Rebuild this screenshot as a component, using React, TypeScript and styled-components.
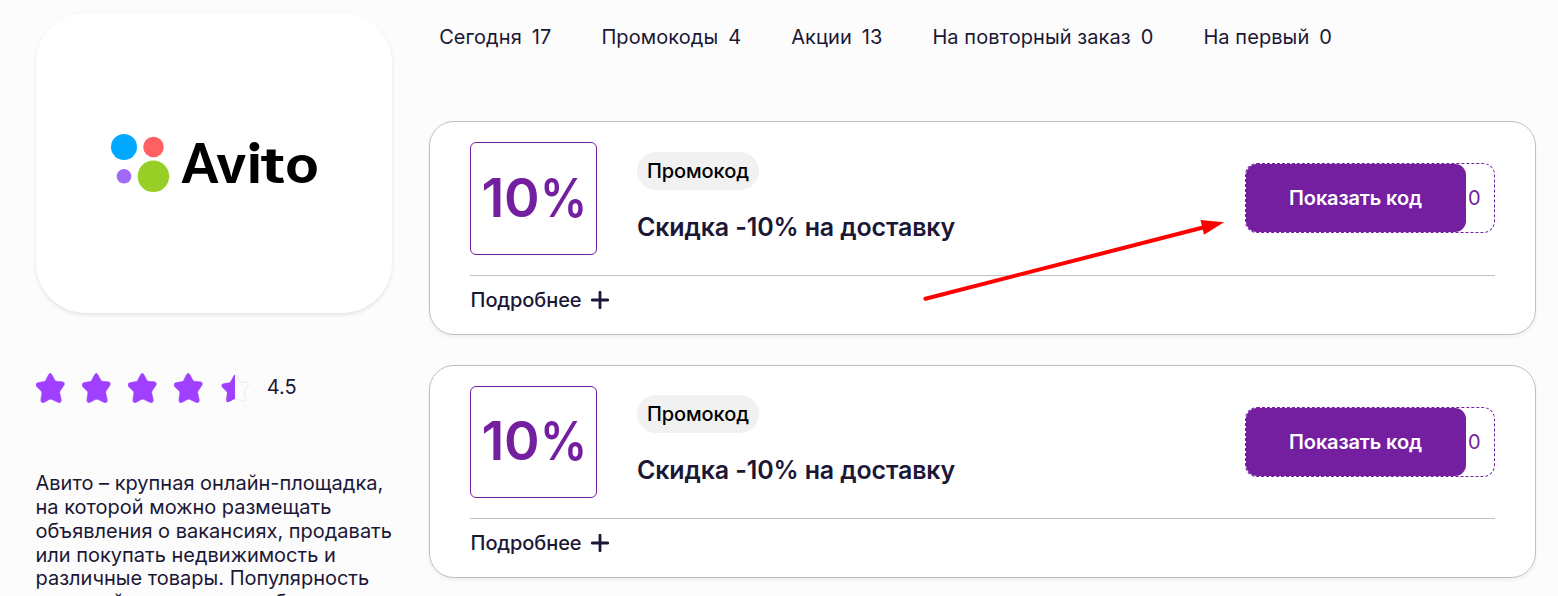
import React from "react";
import styled, { createGlobalStyle } from "styled-components";

const purple = "#731f9f";
const ink = "#1b1736";
const border = "#c0c0c0";

const GlobalStyle = createGlobalStyle`
  * { box-sizing: border-box; }
  body {
    margin: 0;
    background: #fcfcfc;
    color: ${ink};
    font-family: Inter, "Liberation Sans", sans-serif;
    font-size: 20px;
    line-height: 24px;
  }
`;

const Page = styled.div`
  display: flex;
  gap: 37px;
  height: 596px;
  padding: 13px 22px 0 36px;
  overflow: hidden;
`;

const Sidebar = styled.aside`
  flex: 0 0 356px;
`;

const LogoCard = styled.div`
  height: 300px;
  border-radius: 50px;
  background: #fff;
  box-shadow: 0 2px 4px rgba(0, 0, 0, 0.1);
`;

const Rating = styled.div`
  display: flex;
  align-items: center;
  height: 32px;
  margin-top: 59px;
`;

const Stars = styled.div`
  display: flex;
  gap: 16px;
  margin-right: 16.8px;
`;

const Score = styled.span`
  margin-top: -3px;
`;

const About = styled.p`
  margin: 68.2px -10px 0 -0.5px;
  line-height: 23.8px;
  white-space: pre-line;
`;

const Main = styled.main`
  flex: 1;
  min-width: 0;
`;

const Filters = styled.nav`
  display: flex;
  gap: 50px;
  height: 108.48px;
  padding: 12px 0 0 10.2px;
  letter-spacing: 0.07px;
`;

const Filter = styled.div`
  display: flex;
  gap: 10px;
  white-space: nowrap;
`;

const Coupons = styled.div`
  display: grid;
  gap: 30px;
`;

const Card = styled.article`
  height: 213.2px;
  padding: 20px 40px 0;
  border: 1px solid ${border};
  border-radius: 25px;
  background: #fff;
  box-shadow: 0 2px 4px rgba(0, 0, 0, 0.06);
`;

const Offer = styled.div`
  display: flex;
  height: 133.7px;
  border-bottom: 1px solid ${border};
`;

const Discount = styled.div`
  display: flex;
  align-items: center;
  justify-content: center;
  width: 127px;
  height: 112.6px;
  padding: 0 0 1px 8px;
  border: 1px solid ${purple};
  border-radius: 6px;
  color: ${purple};
  font-size: 54px;
  font-weight: 600;
  letter-spacing: -0.2px;
`;

const Percent = styled.span`
  transform: scaleX(0.87);
  transform-origin: left;
`;

const Details = styled.div`
  flex: 1;
  padding: 9.7px 0 0 40px;
`;

const Tag = styled.div`
  width: max-content;
  padding: 7px 10px;
  border-radius: 19px;
  background: #f1f1f1;
  color: #000;
  font-weight: 500;
  letter-spacing: -0.1px;
`;

const Title = styled.h2`
  margin: 21.7px 0 0;
  font-size: 25px;
  font-weight: 600;
  line-height: 31px;
  letter-spacing: -0.14px;
`;

const CodeBox = styled.button`
  display: flex;
  align-items: center;
  width: 250px;
  height: 70px;
  margin-top: 21px;
  padding: 0;
  border: 1px dashed ${purple};
  border-radius: 12px;
  background: #fff;
  color: ${purple};
  font: inherit;
`;

const CodeLabel = styled.span`
  display: flex;
  align-items: center;
  justify-content: center;
  width: 220px;
  height: 68px;
  margin-right: 2px;
  padding-right: 1px;
  border-radius: 11px;
  background: ${purple};
  color: #fff;
  font-weight: 600;
  letter-spacing: -0.15px;
`;

const More = styled.div`
  display: flex;
  align-items: center;
  gap: 9.5px;
  margin: 12px 0 0 0.6px;
  font-weight: 500;
  letter-spacing: -0.1px;
`;

const Arrow = styled.svg`
  position: absolute;
  left: 915px;
  top: 210px;
  pointer-events: none;
`;

const filters = [
  ["Сегодня", 17],
  ["Промокоды", 4],
  ["Акции", 13],
  ["На повторный заказ", 0],
  ["На первый", 0],
] as const;

const starPath =
  "M12.5 2 Q14.3 -1 16 2 L18.9 7.6 Q19.3 8.2 20.2 8.5 L26.4 9.1 Q29.3 9.6 28 12.5 L24.3 18 Q23.6 19 23.7 20 L25.3 27 Q25.3 31 21.8 29.6 L16 26.9 Q14.6 26.2 13.3 26.9 L8.3 29.6 Q4.6 31 4.9 27 L5.8 20.6 Q6 19.2 5.2 18.4 L.7 14 Q-1.2 10.8 2.2 9.9 L8.3 8.7 Q9.3 8.4 9.7 7.6 Z";

function Star({ half = false }: { half?: boolean }) {
  if (!half) {
    return (
      <svg width="30" height="32" viewBox="0 0 30 32">
        <path d={starPath} transform="translate(0 .7)" fill="#a03fff" stroke="#a03fff" strokeWidth=".5" />
      </svg>
    );
  }
  return (
    <svg width="30" height="32" viewBox="0 0 30 32">
      <defs>
        <clipPath id="left-half">
          <rect width="15" height="32" />
        </clipPath>
      </defs>
      <path
        d={starPath}
        transform="translate(1.5 2.3) scale(.95 .9)"
        fill="none"
        stroke="#f0f0f0"
        strokeWidth="1.5"
      />
      <g clipPath="url(#left-half)">
        <path d={starPath} transform="translate(1.5 2.3) scale(.95 .93)" fill="#a03fff" />
      </g>
    </svg>
  );
}

const letters: [string, number, number, string, number, number][] = [
  ["A", 182, 36, "Lato", 56, 900],
  ["v", 216, 30.5, "Inter", 51, 700],
  ["i", 247, 14.8, "Lato", 56, 900],
  ["t", 260.5, 25, "Inter", 50, 600],
  ["o", 285.5, 33, "Lato", 54, 900],
];

function Logo() {
  return (
    <svg width="356" height="300" viewBox="36 13 356 300" role="img" aria-label="Avito">
      <circle cx="124" cy="147" r="13" fill="#00a9ff" />
      <circle cx="153.5" cy="147" r="10.3" fill="#ff6163" />
      <circle cx="124" cy="176.3" r="7.3" fill="#a169f7" />
      <circle cx="153.4" cy="176.3" r="15.8" fill="#97cf26" />
      {letters.map(([letter, x, width, family, size, weight]) => (
        <text
          key={letter}
          x={x}
          y="183.3"
          textLength={width}
          lengthAdjust="spacingAndGlyphs"
          fontFamily={family}
          fontSize={size}
          fontWeight={weight}
        >
          {letter}
        </text>
      ))}
    </svg>
  );
}

function Coupon() {
  return (
    <Card>
      <Offer>
        <Discount>
          10<Percent>%</Percent>
        </Discount>
        <Details>
          <Tag>Промокод</Tag>
          <Title>Скидка -10% на доставку</Title>
        </Details>
        <CodeBox>
          <CodeLabel>Показать код</CodeLabel>0
        </CodeBox>
      </Offer>
      <More>
        Подробнее
        <svg width="18" height="18" viewBox="0 0 18 18">
          <path d="M9 1.2v15.6M1.2 9h15.6" stroke={ink} strokeWidth="2.8" strokeLinecap="round" />
        </svg>
      </More>
    </Card>
  );
}

export default function App() {
  return (
    <>
      <GlobalStyle />
      <Page>
        <Sidebar>
          <LogoCard>
            <Logo />
          </LogoCard>
          <Rating>
            <Stars>
              <Star />
              <Star />
              <Star />
              <Star />
              <Star half />
            </Stars>
            <Score>4.5</Score>
          </Rating>
          <About>
            {"Авито – крупная онлайн-площадка,\nна которой можно размещать\nобъявления о вакансиях, продавать\nили покупать недвижимость и\nразличные товары. Популярность\nторговой площадки на общем"}
          </About>
        </Sidebar>
        <Main>
          <Filters>
            {filters.map(([name, count]) => (
              <Filter key={name}>
                <span>{name}</span>
                <span>{count}</span>
              </Filter>
            ))}
          </Filters>
          <Coupons>
            <Coupon />
            <Coupon />
          </Coupons>
        </Main>
      </Page>
      <Arrow width="320" height="100" viewBox="915 210 320 100">
        <path d="M925.5 298.7L1204 227.3" stroke="#f00" strokeWidth="4" strokeLinecap="round" />
        <path d="M1200.5 220L1224 222.2L1204 234.8Z" fill="#f00" />
      </Arrow>
    </>
  );
}
